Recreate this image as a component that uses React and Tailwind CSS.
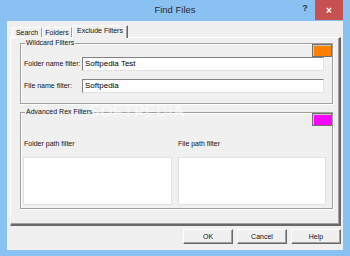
import React from "react";

function Tab({ label, active }) {
  if (active) {
    return (
      <div className="relative z-10 -mb-px h-[13px] w-[56px] border-t border-l border-white border-r border-r-[#696969] bg-[#f0f0f0] text-center leading-[10px] shadow-[inset_-1px_0_0_#a0a0a0]">
        {label}
      </div>
    );
  }
  return (
    <div className="h-[10px] w-[30px] border-t border-l border-white border-r border-r-[#a0a0a0] text-center leading-[10px]">
      {label}
    </div>
  );
}

function Swatch({ color }) {
  return (
    <div className="self-end h-[13px] w-[20px] border border-[#707070] shadow-[inset_1px_1px_0_#c8c8c8]" style={{ background: color }} />
  );
}

function Group({ title, children }) {
  return (
    <div className="relative flex flex-col border border-[#a0a0a0] shadow-[1px_1px_0_#fff,inset_1px_1px_0_#fff]">
      <span className="absolute -top-[5px] left-[4px] bg-[#f0f0f0] px-[1px] leading-[8px]">{title}</span>
      {children}
    </div>
  );
}

function Field({ label, value }) {
  return (
    <div className="flex items-center pl-[3px] pr-[8px]">
      <span className="w-[58px] shrink-0">{label}</span>
      <div className="h-[14px] flex-1 border-t border-l border-[#828282] border-r border-r-[#e3e3e3] border-b border-b-[#e3e3e3] bg-white pl-[2px] text-[8px] leading-[12px] text-black">
        {value}
      </div>
    </div>
  );
}

function Button({ children }) {
  return (
    <div className="h-[15px] w-[50px] border border-t-white border-l-white border-r-[#696969] border-b-[#696969] bg-[#f0f0f0] text-center leading-[13px] shadow-[inset_-1px_-1px_0_#a0a0a0]">
      {children}
    </div>
  );
}

export default function App() {
  return (
    <div
      className="flex h-[256px] w-[350px] flex-col bg-[#89c2f2] text-[7px] text-[#111]"
      style={{ fontFamily: '"Liberation Sans", Arial, sans-serif' }}
    >
      {/* title bar */}
      <div className="flex h-[21px] shrink-0 items-start">
        <div className="flex-1 pl-[55px] text-center text-[9.5px] leading-[20px] text-[#2a2a2a]">Find Files</div>
        <div className="flex w-[55px] items-start">
          <span className="w-[20px] text-center text-[9px] font-bold leading-[16px] text-[#333]">?</span>
          <div className="flex h-[20px] w-[28px] items-center justify-center bg-[#c75050] text-[10px] font-bold text-white">
            ×
          </div>
        </div>
      </div>

      {/* client area */}
      <div className="mx-[7px] mb-[6px] flex flex-1 flex-col bg-[#f0f0f0] pt-[4px] pl-[3px] pr-[2px]">
        <div className="flex items-end pl-[2px]">
          <Tab label="Search" />
          <Tab label="Folders" />
          <Tab label="Exclude Filters" active />
        </div>

        <div className="relative flex h-[189px] flex-col gap-[8px] border-t border-l border-white border-r-2 border-b-2 border-r-[#696969] border-b-[#696969] pt-[5px] pl-[9px] pr-[6px] shadow-[inset_-1px_-1px_0_#a0a0a0]">
          <Group title="Wildcard Filters">
            <Swatch color="#ff8000" />
            <div className="flex flex-col gap-[8px] pb-[10px]">
              <Field label="Folder name filter:" value="Softpedia Test" />
              <Field label="File name filter:" value="Softpedia" />
            </div>
          </Group>

          <Group title="Advanced Rex Filters">
            <Swatch color="#ff00ff" />
            <div className="flex gap-[6px] pt-[14px] pl-[2px] pr-[6px] pb-[3px]">
              <div className="flex w-[149px] flex-col gap-[9px]">
                <span className="pl-[1px] leading-[8px]">Folder path filter</span>
                <div className="h-[48px] border border-[#e2e2e2] bg-white" />
              </div>
              <div className="flex w-[148px] flex-col gap-[9px]">
                <span className="leading-[8px]">File path filter</span>
                <div className="h-[48px] border border-[#e2e2e2] bg-white" />
              </div>
            </div>
          </Group>

          <span className="pointer-events-none absolute left-[78px] top-[62px] text-[16px] font-bold tracking-[0.5px] text-white opacity-50">
            SOFTPEDIA
          </span>
        </div>

        <div className="mt-[3px] flex justify-end gap-[4px]">
          <Button>OK</Button>
          <Button>Cancel</Button>
          <Button>Help</Button>
        </div>
      </div>
    </div>
  );
}
